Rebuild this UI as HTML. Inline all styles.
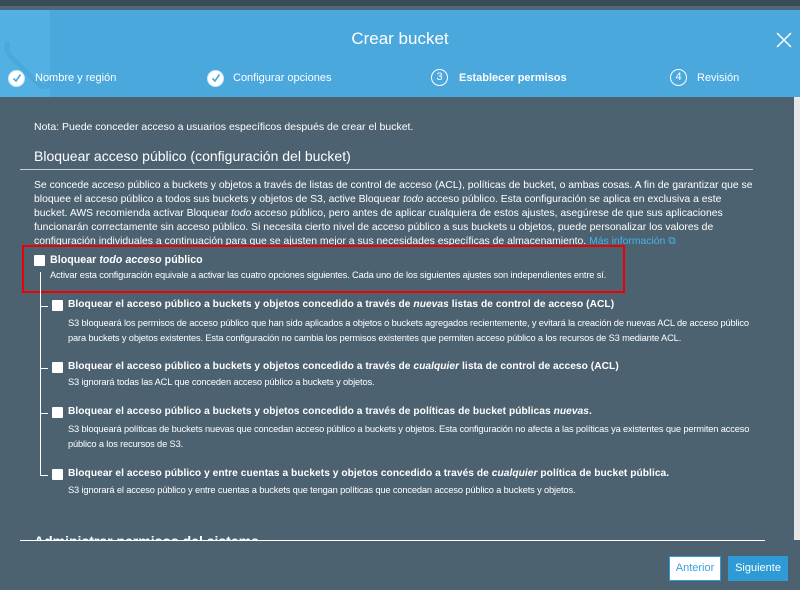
<!DOCTYPE html>
<html><head><meta charset="utf-8"><style>
body{margin:0;width:800px;height:590px;overflow:hidden;background:#4d6270;font-family:"Liberation Sans",sans-serif;color:#fff;position:relative}
.a{position:absolute;white-space:nowrap}
.p{font-size:11px;line-height:14px}
.d{font-size:9.3px;letter-spacing:-0.15px}
.t{font-size:10.2px;font-weight:bold;letter-spacing:0.05px}
.cb{position:absolute;width:11px;height:11px;background:#fff;border-radius:1px}
.circ{position:absolute;width:17px;height:17px;border:1.5px solid #fff;border-radius:50%;box-sizing:border-box;font-size:11px;text-align:center;line-height:14px}
</style></head><body>
<div class="a" style="left:0;top:0;width:800px;height:6px;background:#3a4b58"></div>
<div class="a" style="left:0;top:6px;width:800px;height:4px;background:#52667a"></div>
<div class="a" style="left:0;top:10px;width:800px;height:87px;background:#4aa8dc;overflow:hidden">
<div class="a" style="left:-10px;top:-30px;width:60px;height:140px;background:#52b0e2;border-radius:0 0 20px 20px"></div>
<svg class="a" style="left:0;top:20px" width="60" height="60"><path d="M8 12 Q4 20 12 28 L40 55 Q50 60 50 50" stroke="#4aa8dc" stroke-width="5" fill="none"/></svg>
</div>
<div class="a" style="left:0;top:29px;width:800px;text-align:center;font-size:17px">Crear bucket</div>
<svg class="a" style="left:776px;top:32px" width="16" height="16"><path d="M1 1L15 15M15 1L1 15" stroke="#fff" stroke-width="1.5"/></svg>
<div class="circ" style="left:8px;top:70px;background:#fff;border-color:#cfe8f6"><svg width="14" height="14"><path d="M3.5 7.5L6 10L10.5 3.5" stroke="#4aa8dc" stroke-width="1.6" fill="none"/></svg></div>
<div class="a" style="left:35px;top:72px;font-size:11px">Nombre y región</div>
<div class="circ" style="left:207px;top:70px;background:#fff;border-color:#cfe8f6"><svg width="14" height="14"><path d="M3.5 7.5L6 10L10.5 3.5" stroke="#4aa8dc" stroke-width="1.6" fill="none"/></svg></div>
<div class="a" style="left:233px;top:72px;font-size:11px">Configurar opciones</div>
<div class="circ" style="left:431px;top:69px">3</div>
<div class="a" style="left:459px;top:72px;font-size:11px;font-weight:bold">Establecer permisos</div>
<div class="circ" style="left:670px;top:69px">4</div>
<div class="a" style="left:697px;top:72px;font-size:11px">Revisión</div>
<div class="a" style="left:794px;top:97px;width:6px;height:443px;background:#e8e8e8"></div>

<div class="a p" style="left:34px;top:120px;font-size:10.5px">Nota: Puede conceder acceso a usuarios específicos después de crear el bucket.</div>
<div class="a" style="left:34px;top:148px;font-size:14px">Bloquear acceso público (configuración del bucket)</div>
<div class="a" style="left:20px;top:169px;width:733px;height:1px;background:#c8ced3"></div>
<div class="a p" style="left:34px;top:179px;font-size:10.4px">Se concede acceso público a buckets y objetos a través de listas de control de acceso (ACL), políticas de bucket, o ambas cosas. A fin de garantizar que se<br>bloquee el acceso público a todos sus buckets y objetos de S3, active Bloquear <i>todo</i> acceso público. Esta configuración se aplica en exclusiva a este<br>bucket. AWS recomienda activar Bloquear <i>todo</i> acceso público, pero antes de aplicar cualquiera de estos ajustes, asegúrese de que sus aplicaciones<br>funcionarán correctamente sin acceso público. Si necesita cierto nivel de acceso público a sus buckets u objetos, puede personalizar los valores de<br>configuración individuales a continuación para que se ajusten mejor a sus necesidades específicas de almacenamiento. <span style="color:#44b4ec">Más información ⧉</span></div>

<div class="a" style="left:22px;top:245px;width:599px;height:44px;border:2px solid #e00"></div>
<div class="cb" style="left:34px;top:255px"></div>
<div class="a t" style="left:50px;top:254px;font-size:10.6px">Bloquear <i>todo acceso</i> público</div>
<div class="a d" style="left:50px;top:270px">Activar esta configuración equivale a activar las cuatro opciones siguientes. Cada uno de los siguientes ajustes son independientes entre sí.</div>
<div class="a" style="left:40px;top:272px;width:1px;height:203px;background:#fff"></div>

<div class="a" style="left:40px;top:306px;width:8px;height:1px;background:#fff"></div>
<div class="cb" style="left:52px;top:300px"></div>
<div class="a t" style="left:68px;top:299px">Bloquear el acceso público a buckets y objetos concedido a través de <i>nuevas</i> listas de control de acceso (ACL)</div>
<div class="a d" style="left:68px;top:316px;line-height:15px">S3 bloqueará los permisos de acceso público que han sido aplicados a objetos o buckets agregados recientemente, y evitará la creación de nuevas ACL de acceso público<br>para buckets y objetos existentes. Esta configuración no cambia los permisos existentes que permiten acceso público a los recursos de S3 mediante ACL.</div>

<div class="a" style="left:40px;top:368px;width:8px;height:1px;background:#fff"></div>
<div class="cb" style="left:52px;top:362px"></div>
<div class="a t" style="left:68px;top:361px">Bloquear el acceso público a buckets y objetos concedido a través de <i>cualquier</i> lista de control de acceso (ACL)</div>
<div class="a d" style="left:68px;top:377px">S3 ignorará todas las ACL que conceden acceso público a buckets y objetos.</div>

<div class="a" style="left:40px;top:413px;width:8px;height:1px;background:#fff"></div>
<div class="cb" style="left:52px;top:407px"></div>
<div class="a t" style="left:68px;top:406px">Bloquear el acceso público a buckets y objetos concedido a través de políticas de bucket públicas <i>nuevas</i>.</div>
<div class="a d" style="left:68px;top:422px;line-height:15px">S3 bloqueará políticas de buckets nuevas que concedan acceso público a buckets y objetos. Esta configuración no afecta a las políticas ya existentes que permiten acceso<br>público a los recursos de S3.</div>

<div class="a" style="left:40px;top:475px;width:8px;height:1px;background:#fff"></div>
<div class="cb" style="left:52px;top:469px"></div>
<div class="a t" style="left:68px;top:468px">Bloquear el acceso público y entre cuentas a buckets y objetos concedido a través de <i>cualquier</i> política de bucket pública.</div>
<div class="a d" style="left:68px;top:485px">S3 ignorará el acceso público y entre cuentas a buckets que tengan políticas que concedan acceso público a buckets y objetos.</div>

<div class="a" style="left:20px;top:533px;width:760px;height:7px;overflow:hidden"><div style="position:absolute;left:14px;top:0;font-size:14px;font-weight:bold">Administrar permisos del sistema</div></div>
<div class="a" style="left:20px;top:540px;width:745px;height:1px;background:#fff"></div>

<div class="a" style="left:669px;top:556px;width:52px;height:25px;background:#fff;box-sizing:border-box;border:1px solid #2e9ad6;color:#3aa0dd;font-size:11px;text-align:center;line-height:23px">Anterior</div>
<div class="a" style="left:728px;top:556px;width:60px;height:25px;background:#2e9ad6;font-size:11px;text-align:center;line-height:25px">Siguiente</div>
</body></html>
